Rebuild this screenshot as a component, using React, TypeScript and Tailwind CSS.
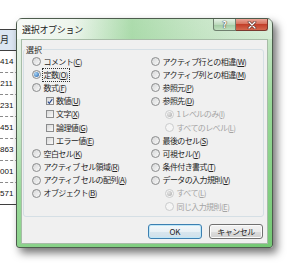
import React from "react";

type Item = {
  kind: "radio" | "check";
  t: string;
  k: string;
  checked?: boolean;
  disabled?: boolean;
  sub?: boolean;
  focus?: boolean;
};

const leftItems: Item[] = [
  { kind: "radio", t: "コメント", k: "C" },
  { kind: "radio", t: "定数", k: "O", checked: true, focus: true },
  { kind: "radio", t: "数式", k: "F" },
  { kind: "check", t: "数値", k: "U", checked: true, sub: true },
  { kind: "check", t: "文字", k: "X", sub: true },
  { kind: "check", t: "論理値", k: "G", sub: true },
  { kind: "check", t: "エラー値", k: "E", sub: true },
  { kind: "radio", t: "空白セル", k: "K" },
  { kind: "radio", t: "アクティブ セル領域", k: "R" },
  { kind: "radio", t: "アクティブ セルの配列", k: "A" },
  { kind: "radio", t: "オブジェクト", k: "B" },
];

const rightItems: Item[] = [
  { kind: "radio", t: "アクティブ行との相違", k: "W" },
  { kind: "radio", t: "アクティブ列との相違", k: "M" },
  { kind: "radio", t: "参照元", k: "P" },
  { kind: "radio", t: "参照先", k: "D" },
  { kind: "radio", t: "1 レベルのみ", k: "I", checked: true, disabled: true, sub: true },
  { kind: "radio", t: "すべてのレベル", k: "L", disabled: true, sub: true },
  { kind: "radio", t: "最後のセル", k: "S" },
  { kind: "radio", t: "可視セル", k: "Y" },
  { kind: "radio", t: "条件付き書式", k: "T" },
  { kind: "radio", t: "データの入力規則", k: "V" },
  { kind: "radio", t: "すべて", k: "L", checked: true, disabled: true, sub: true },
  { kind: "radio", t: "同じ入力規則", k: "E", disabled: true, sub: true },
];

const sheetRows = ["414", "211", "231", "451", "863", "001", "571"];

const Radio = ({ checked, disabled }: { checked?: boolean; disabled?: boolean }) => (
  <span
    className={`flex h-[9px] w-[9px] shrink-0 items-center justify-center rounded-full border ${
      disabled
        ? "border-[#cbcccd] bg-[#f5f5f5]"
        : "border-[#8b8c8d] bg-[linear-gradient(135deg,#d6d7d8,#f9f9f9)]"
    }`}
  >
    {checked && (
      <span
        className={`h-[5px] w-[5px] rounded-full ${
          disabled
            ? "bg-[radial-gradient(circle_at_35%_35%,#e6e6e6,#a9a9a9)]"
            : "bg-[radial-gradient(circle_at_35%_35%,#a8d6f7,#1d5ba6)]"
        }`}
      />
    )}
  </span>
);

const Check = ({ checked }: { checked?: boolean }) => (
  <span className="flex h-[8px] w-[8px] shrink-0 items-center justify-center border border-[#8b8c8d] bg-[linear-gradient(135deg,#d8d8d8,#fafafa)]">
    {checked && (
      <svg width="7" height="7" viewBox="0 0 7 7">
        <path d="M1 3.6 L2.7 5.6 L6.2 0.8" fill="none" stroke="#2a4a8e" strokeWidth="1.3" />
      </svg>
    )}
  </span>
);

const Row = ({ item }: { item: Item }) => (
  <div
    className={`flex h-[13.2px] items-center ${
      item.kind === "check" ? "pl-[14.5px]" : item.sub ? "pl-[14px]" : ""
    }`}
  >
    {item.kind === "radio" ? (
      <Radio checked={item.checked} disabled={item.disabled} />
    ) : (
      <Check checked={item.checked} />
    )}
    <span
      className={`whitespace-nowrap text-[8px] leading-[10px] tracking-[-0.6px] ${
        item.kind === "radio" ? "ml-[3px]" : "ml-[2px]"
      } ${item.disabled ? "text-[#a4a4a4]" : "text-[#262626]"} ${
        item.focus ? "outline outline-1 outline-dotted outline-[#333] outline-offset-[1px]" : ""
      }`}
    >
      {item.t}(<span className="underline underline-offset-[1px]">{item.k}</span>)
    </span>
  </div>
);

export default function App() {
  return (
    <div className="relative h-[264px] w-[300px] overflow-hidden bg-white font-['Noto_Sans_CJK_JP','Noto_Sans',sans-serif]">
      {/* sheet behind the dialog */}
      <div className="w-[120px] pt-[29px]">
        <div className="flex h-[22px] items-center border-y border-[#3f3f3f] bg-[#dbe5f1]">
          <span className="text-[9px] text-[#1f1f1f]">月</span>
        </div>
        {sheetRows.map((n, i) => (
          <div
            key={i}
            className={`flex h-[22px] items-center border-b ${
              i === sheetRows.length - 1 ? "border-solid border-[#3f3f3f]" : "border-dashed border-[#8a8a8a]"
            }`}
          >
            <span className="w-[13px] text-right font-['Liberation_Sans',sans-serif] text-[8px] text-[#111]">{n}</span>
          </div>
        ))}
      </div>

      {/* dialog window */}
      <div className="absolute left-[16px] top-[18px] flex h-[230px] w-[257px] flex-col rounded-t-[6px] rounded-b-[3px] border border-[#4d5c4d] bg-[linear-gradient(160deg,#eef5ee_0%,#d0e9d0_30%,#98d898_55%,#74c974_100%)] px-[4px] pb-[3px] shadow-[4px_5px_9px_rgba(0,0,0,0.55)]">
        {/* title bar */}
        <div className="-mx-[4px] flex h-[20px] bg-[linear-gradient(90deg,rgba(255,255,255,0.55)_0%,rgba(255,255,255,0.25)_22%,rgba(110,195,110,0.45)_45%,rgba(150,210,150,0.25)_72%,rgba(255,255,255,0.25)_100%)] px-[4px]">
          <span className="ml-[1px] self-center text-[9px] leading-none tracking-[-0.3px] text-[#1a1a1a] [text-shadow:0_0_5px_#fff]">
            選択オプション
          </span>
          <div className="flex-1" />
          <div className="flex h-[12px] self-start">
            <div className="flex w-[23px] items-center justify-center rounded-bl-[3px] border border-t-0 border-[#6f806f] bg-[linear-gradient(#e6f2e6,#bcd9bc_50%,#a1c9a1_51%,#bfe0bf)] text-[9px] font-bold leading-none text-white [text-shadow:0_0_1px_#333,0_0_1px_#333]">
              ?
            </div>
            <div className="flex w-[32px] items-center justify-center rounded-br-[3px] border border-l-0 border-t-0 border-[#7a3a30] bg-[linear-gradient(#eaa697,#d6715c_45%,#c2402a_50%,#d4694e_100%)]">
              <svg width="10" height="8" viewBox="0 0 10 8">
                <path d="M2 1 L8 7 M8 1 L2 7" stroke="#5a2a22" strokeWidth="2.6" strokeLinecap="round" />
                <path d="M2 1 L8 7 M8 1 L2 7" stroke="#fff" strokeWidth="1.4" strokeLinecap="round" />
              </svg>
            </div>
          </div>
        </div>

        {/* client area */}
        <div className="flex h-[205px] flex-col border border-[#a7bca7] bg-[#f0f0f0]">
          <div className="ml-[1px] mr-[3px] mt-[9px] flex h-[168px] flex-col rounded-[3px] border border-[#d5dfe5]">
            <span className="-mt-[6px] ml-[1px] h-[11px] self-start bg-[#f0f0f0] px-[1px] text-[8px] leading-[11px] text-[#262626]">
              選択
            </span>
            <div className="grid grid-cols-[119px_1fr] pl-[7.5px]">
              <div className="flex flex-col">
                {leftItems.map((it, i) => (
                  <Row key={i} item={it} />
                ))}
              </div>
              <div className="flex flex-col">
                {rightItems.map((it, i) => (
                  <Row key={i} item={it} />
                ))}
              </div>
            </div>
          </div>

          <div className="mt-[7px] flex justify-end gap-[7px] pr-[4px]">
            <button className="flex h-[15px] w-[54px] items-center justify-center rounded-[3px] border border-[#3c7fb1] bg-[linear-gradient(#f3f8fb_0%,#e8f0f5_50%,#d8e6ee_51%,#d0e0ea_100%)] text-[8px] leading-none text-[#1b1b1b] shadow-[inset_0_0_0_1px_#bfe7f8]">
              OK
            </button>
            <button className="flex h-[15px] w-[54px] items-center justify-center rounded-[3px] border border-[#707070] bg-[linear-gradient(#f2f2f2_0%,#ebebeb_50%,#dddddd_51%,#cfcfcf_100%)] text-[8px] leading-none tracking-[-0.5px] text-[#1b1b1b] shadow-[inset_0_0_0_1px_#fbfbfb]">
              キャンセル
            </button>
          </div>
        </div>
      </div>
    </div>
  );
}
